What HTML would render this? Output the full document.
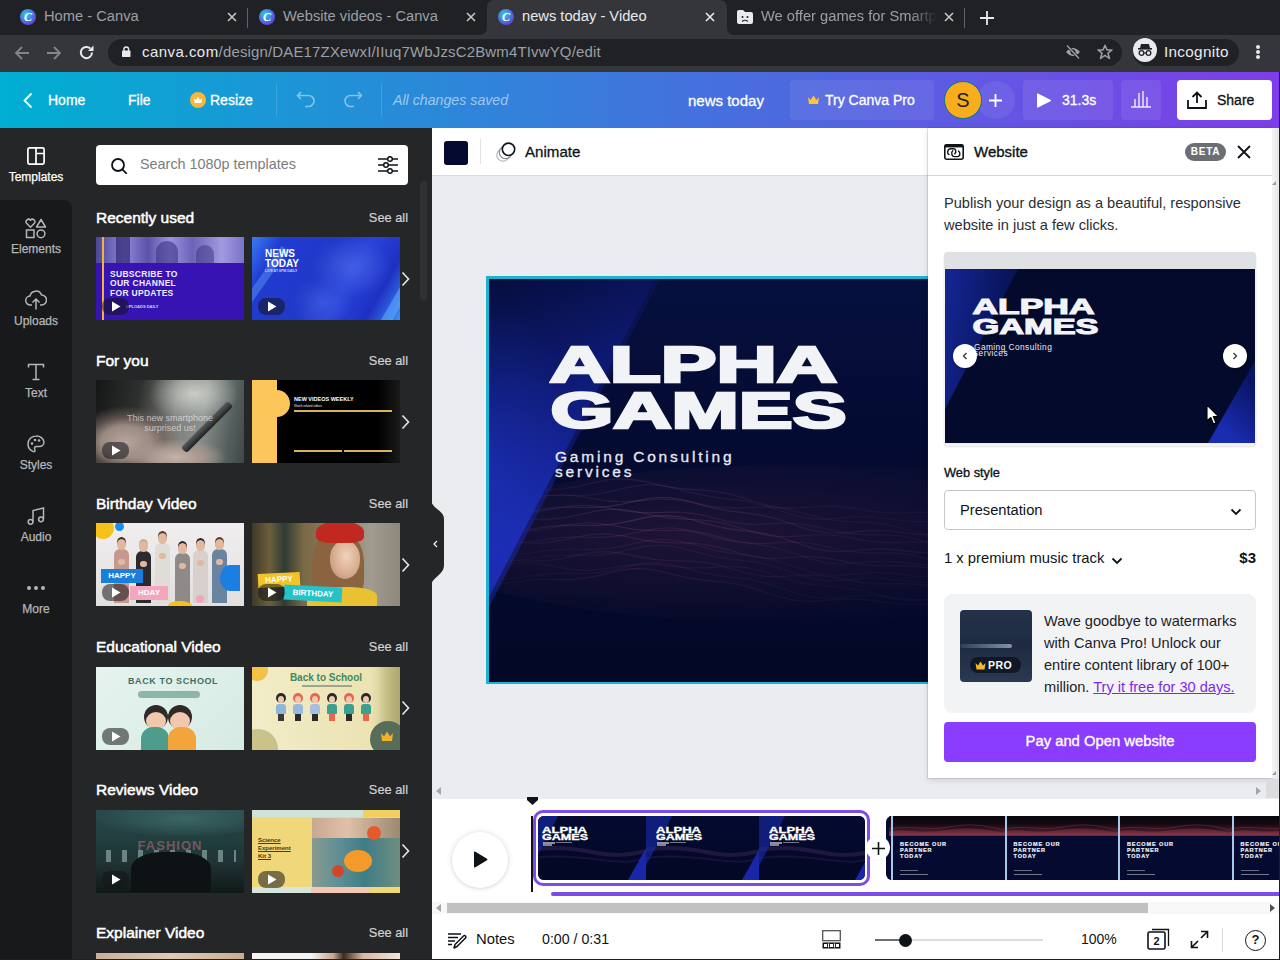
<!DOCTYPE html>
<html><head><meta charset="utf-8">
<style>
*{box-sizing:border-box;margin:0;padding:0}
html,body{width:1280px;height:960px;overflow:hidden;font-family:"Liberation Sans",sans-serif;background:#ebecf0}
.a{position:absolute;white-space:nowrap}
#tabs{left:0;top:0;width:1280px;height:35px;background:#202124}
#tbar{left:0;top:35px;width:1280px;height:37px;background:#35363a}
#hdr{left:0;top:72px;width:1280px;height:56px;background:linear-gradient(90deg,#00afd1 0%,#7e3de8 100%)}
#nav{left:0;top:128px;width:72px;height:832px;background:#18191b}
#panel{left:72px;top:128px;width:360px;height:832px;background:#252627}
#canvas{left:432px;top:128px;width:848px;height:832px;background:#ebecf0}
.tabt{font-size:14.7px;color:#9aa0a6;white-space:nowrap}
.fav{width:16px;height:16px;border-radius:50%;background:radial-gradient(circle at 40% 35%,#2ad0e8,#5b4bd8 70%,#6d3bd8);color:#fff;font:italic bold 12px "Liberation Serif",serif;text-align:center;line-height:16px}
.x{color:#c4c7c5;font-size:16px}
.pb{width:27px;height:17px;border-radius:8px;background:rgba(20,20,25,.55)}
.sh{font-size:15.5px;color:#fff;-webkit-text-stroke:.5px currentColor}
.sa{left:340px;width:68px;text-align:right;font-size:12.8px;color:#d0d2d5;-webkit-text-stroke:.2px currentColor}
.nl{left:0;width:72px;text-align:center;font-size:12px;color:#b4b6b9;-webkit-text-stroke:.25px currentColor}
.th{position:absolute;width:148px;height:83px;overflow:hidden}
.t14{font-size:14px}
.t15{font-size:15px}
.sb15{font-size:15px;color:#0e1318;-webkit-text-stroke:.35px currentColor}
.circ{width:24px;height:24px;border-radius:50%;background:#fff;box-shadow:0 1px 3px rgba(0,0,0,.25)}
.hbtn{color:#fff;font-size:14px;-webkit-text-stroke:.3px currentColor}
</style></head>
<body>
<!-- tab strip -->
<div id="tabs" class="a">
  <div class="a fav" style="left:20px;top:9px">C</div>
  <div class="a tabt" style="left:44px;top:8px">Home - Canva</div>
  <svg class="a" style="left:227px;top:12px" width="10" height="10" viewBox="0 0 10 10"><path d="M1 1L9 9M9 1L1 9" stroke="#c4c7c5" stroke-width="1.6"/></svg>
  <div class="a" style="left:247px;top:8px;width:1px;height:20px;background:#5f6368"></div>
  <div class="a fav" style="left:259px;top:9px">C</div>
  <div class="a tabt" style="left:283px;top:8px">Website videos - Canva</div>
  <svg class="a" style="left:466px;top:12px" width="10" height="10" viewBox="0 0 10 10"><path d="M1 1L9 9M9 1L1 9" stroke="#c4c7c5" stroke-width="1.6"/></svg>
  <svg class="a" style="left:479px;top:0" width="256" height="35" viewBox="0 0 256 35"><path d="M0 35 Q8 35 8 27 L8 8 Q8 0 16 0 L240 0 Q248 0 248 8 L248 27 Q248 35 256 35 Z" fill="#35363a"/></svg>
  <div class="a fav" style="left:498px;top:9px">C</div>
  <div class="a tabt" style="left:522px;top:8px;color:#e8eaed">news today - Video</div>
  <svg class="a" style="left:705px;top:12px" width="10" height="10" viewBox="0 0 10 10"><path d="M1 1L9 9M9 1L1 9" stroke="#e8eaed" stroke-width="1.6"/></svg>
  <svg class="a" style="left:737px;top:10px" width="16" height="14" viewBox="0 0 16 14"><path d="M0 2Q0 0 2 0H6L8 2H14Q16 2 16 4V12Q16 14 14 14H2Q0 14 0 12Z" fill="#e8eaed"/><circle cx="5.5" cy="7" r="1" fill="#202124"/><circle cx="10.5" cy="7" r="1" fill="#202124"/><path d="M5 11.5Q8 9 11 11.5" stroke="#202124" stroke-width="1.2" fill="none"/></svg>
  <div class="a tabt" style="left:761px;top:8px;width:176px;overflow:hidden;-webkit-mask-image:linear-gradient(90deg,#000 85%,transparent)">We offer games for Smartphones</div>
  <svg class="a" style="left:944px;top:12px" width="10" height="10" viewBox="0 0 10 10"><path d="M1 1L9 9M9 1L1 9" stroke="#c4c7c5" stroke-width="1.6"/></svg>
  <div class="a" style="left:964px;top:8px;width:1px;height:20px;background:#5f6368"></div>
  <svg class="a" style="left:980px;top:11px" width="14" height="14" viewBox="0 0 14 14"><path d="M7 0V14M0 7H14" stroke="#e8eaed" stroke-width="1.8"/></svg>
</div>
<!-- toolbar -->
<div id="tbar" class="a">
  <svg class="a" style="left:14px;top:10px" width="16" height="16" viewBox="0 0 16 16"><path d="M15 8H2M8 2L2 8L8 14" stroke="#80868b" stroke-width="1.8" fill="none"/></svg>
  <svg class="a" style="left:46px;top:10px" width="16" height="16" viewBox="0 0 16 16"><path d="M1 8H14M8 2L14 8L8 14" stroke="#80868b" stroke-width="1.8" fill="none"/></svg>
  <svg class="a" style="left:78px;top:9px" width="17" height="17" viewBox="0 0 17 17"><path d="M14 8.5A5.6 5.6 0 1 1 12.3 4.5" stroke="#e8eaed" stroke-width="2" fill="none"/><path d="M15.5 1.5V7H10Z" fill="#e8eaed"/></svg>
  <div class="a" style="left:108px;top:4px;width:1014px;height:27px;background:#202124;border-radius:14px"></div>
  <svg class="a" style="left:122px;top:11px" width="9" height="11" viewBox="0 0 9 11"><rect x="0" y="4.5" width="8.5" height="6.5" rx=".8" fill="#e8eaed"/><path d="M1.9 5V3.3A2.35 2.35 0 0 1 6.6 3.3V5" stroke="#e8eaed" stroke-width="1.4" fill="none"/></svg>
  <div class="a" style="left:142px;top:8px;font-size:15px;color:#e8eaed;white-space:nowrap;letter-spacing:0.45px">canva.com<span style="color:#9aa0a6;letter-spacing:.15px">/design/DAE17ZXewxI/IIuq7WbJzsC2Bwm4TIvwYQ/edit</span></div>
  <svg class="a" style="left:1065px;top:10px" width="16" height="14" viewBox="0 0 16 14"><path d="M1 7Q8 -1 15 7Q8 15 1 7Z" fill="#9aa0a6"/><circle cx="8" cy="7" r="2.5" fill="#202124"/><path d="M2 0.5L14 13.5" stroke="#202124" stroke-width="2.6"/><path d="M2 0.5L14 13.5" stroke="#9aa0a6" stroke-width="1.4"/></svg>
  <svg class="a" style="left:1097px;top:9px" width="16" height="16" viewBox="0 0 16 16"><path d="M8 1.2L10 6H15L11 9.2L12.5 14.5L8 11.4L3.5 14.5L5 9.2L1 6H6Z" stroke="#9aa0a6" stroke-width="1.5" fill="none" stroke-linejoin="round"/></svg>
  <div class="a" style="left:1133px;top:4px;width:106px;height:27px;background:#202124;border-radius:14px"></div>
  <div class="a" style="left:1133px;top:3px;width:24px;height:24px;border-radius:50%;background:#e8eaed"></div>
  <svg class="a" style="left:1137px;top:8px" width="16" height="14" viewBox="0 0 16 14"><path d="M4 1H12L13 5H3Z" fill="#202124"/><rect x="1" y="5" width="14" height="1.6" fill="#202124"/><circle cx="4.5" cy="10" r="2.3" stroke="#202124" stroke-width="1.3" fill="none"/><circle cx="11.5" cy="10" r="2.3" stroke="#202124" stroke-width="1.3" fill="none"/><path d="M6.8 10H9.2" stroke="#202124" stroke-width="1.2"/></svg>
  <div class="a" style="left:1164px;top:8px;font-size:15.3px;color:#e8eaed;letter-spacing:0.3px">Incognito</div>
  <div class="a" style="left:1256px;top:10px;width:4px;height:4px;border-radius:50%;background:#e8eaed"></div>
  <div class="a" style="left:1256px;top:15px;width:4px;height:4px;border-radius:50%;background:#e8eaed"></div>
  <div class="a" style="left:1256px;top:20px;width:4px;height:4px;border-radius:50%;background:#e8eaed"></div>
</div>
<!-- header -->
<div id="hdr" class="a">
  <svg class="a" style="left:22px;top:20px" width="12" height="17" viewBox="0 0 12 17"><path d="M9.5 1.5L2.5 8.5L9.5 15.5" stroke="#fff" stroke-width="1.8" fill="none"/></svg>
  <div class="a hbtn" style="left:48px;top:20px">Home</div>
  <div class="a hbtn" style="left:128px;top:20px">File</div>
  <div class="a" style="left:190px;top:20px;width:16px;height:16px;border-radius:50%;background:#f6b73c"></div>
  <svg class="a" style="left:193px;top:23px" width="10" height="10" viewBox="0 0 10 10"><path d="M1 3L3 5.2L5 1.5L7 5.2L9 3L8.3 8H1.7Z" fill="#fff"/></svg>
  <div class="a hbtn" style="left:210px;top:20px">Resize</div>
  <div class="a" style="left:276px;top:12px;width:1px;height:32px;background:rgba(255,255,255,.15)"></div>
  <svg class="a" style="left:296px;top:19px" width="20" height="17" viewBox="0 0 20 17"><path d="M5 1L1.5 4.5L5 8M1.5 4.5H12.5A5.5 5.5 0 0 1 12.5 15.5H9" stroke="rgba(255,255,255,.45)" stroke-width="1.6" fill="none"/></svg>
  <svg class="a" style="left:343px;top:19px" width="20" height="17" viewBox="0 0 20 17"><path d="M15 1L18.5 4.5L15 8M18.5 4.5H7.5A5.5 5.5 0 0 0 7.5 15.5H11" stroke="rgba(255,255,255,.45)" stroke-width="1.6" fill="none"/></svg>
  <div class="a" style="left:381px;top:12px;width:1px;height:32px;background:rgba(255,255,255,.15)"></div>
  <div class="a" style="left:393px;top:20px;color:rgba(255,255,255,.55);font-style:italic;font-size:14.2px">All changes saved</div>
  <div class="a hbtn" style="left:688px;top:20px;font-size:15px">news today</div>
  <div class="a" style="left:790px;top:8px;width:144px;height:40px;background:rgba(255,255,255,.07);border-radius:4px"></div>
  <svg class="a" style="left:807px;top:22px" width="13" height="12" viewBox="0 0 13 12"><path d="M1 3L3.5 6L6.5 1.5L9.5 6L12 3L11 10H2Z" fill="#ffc43a"/></svg>
  <div class="a hbtn" style="left:825px;top:20px">Try Canva Pro</div>
  <div class="a" style="left:977px;top:9px;width:38px;height:38px;border-radius:50%;background:rgba(255,255,255,.07)"></div>
  <svg class="a" style="left:989px;top:22px" width="13" height="13" viewBox="0 0 13 13"><path d="M6.5 0V13M0 6.5H13" stroke="#fff" stroke-width="1.8"/></svg>
  <div class="a" style="left:944px;top:9px;width:38px;height:38px;border-radius:50%;background:#f7ad1c;border:1.5px solid #0b7a86"></div>
  <div class="a" style="left:944px;top:17px;width:38px;text-align:center;font-size:20px;color:#1e1e1e">S</div>
  <div class="a" style="left:1023px;top:8px;width:90px;height:40px;background:rgba(255,255,255,.08);border-radius:4px"></div>
  <svg class="a" style="left:1036px;top:20px" width="16" height="17" viewBox="0 0 16 17"><path d="M2 1.5Q1 1 1 2.3V14.7Q1 16 2 15.5L14.5 9.3Q15.5 8.5 14.5 7.7Z" fill="#fff"/></svg>
  <div class="a hbtn" style="left:1062px;top:20px">31.3s</div>
  <div class="a" style="left:1121px;top:8px;width:40px;height:40px;background:rgba(255,255,255,.08);border-radius:4px"></div>
  <svg class="a" style="left:1131px;top:18px" width="20" height="18" viewBox="0 0 20 18"><path d="M0 17H20M4 17V9M8 17V3M12 17V1M16 17V7" stroke="rgba(255,255,255,.85)" stroke-width="1.5"/></svg>
  <div class="a" style="left:1177px;top:8px;width:95px;height:40px;background:#fff;border-radius:4px"></div>
  <svg class="a" style="left:1187px;top:19px" width="20" height="18" viewBox="0 0 20 18"><path d="M1 9V17H19V9M10 12V1.5M5.5 6L10 1.5L14.5 6" stroke="#0e1318" stroke-width="1.8" fill="none"/></svg>
  <div class="a hbtn" style="left:1217px;top:20px;color:#0e1318">Share</div>
</div>
<div id="nav" class="a">
  <div class="a" style="left:0;top:0;width:72px;height:72px;background:#252627"></div>
  <div class="a" style="left:0;top:72px;width:72px;height:20px;background:#252627"></div>
  <div class="a" style="left:0;top:72px;width:72px;height:760px;background:#18191b;border-top-right-radius:8px"></div>
  <svg class="a" style="left:27px;top:19px" width="18" height="18" viewBox="0 0 18 18"><rect x="0.9" y="0.9" width="16.2" height="16.2" rx="1.5" stroke="#fff" stroke-width="1.7" fill="none"/><path d="M9 1V17M9 6.5H17" stroke="#fff" stroke-width="1.7"/></svg>
  <div class="a nl" style="top:42px;color:#fff">Templates</div>
  <svg class="a" style="left:25px;top:90px" width="22" height="21" viewBox="0 0 22 21"><path d="M5.5 9.2L1.6 5.3A2.2 2.2 0 0 1 5.5 2.2A2.2 2.2 0 0 1 9.4 5.3Z" stroke="#b4b6b9" stroke-width="1.5" fill="none" stroke-linejoin="round"/><path d="M16 1.5L20.5 9H11.5Z" stroke="#b4b6b9" stroke-width="1.5" fill="none" stroke-linejoin="round"/><rect x="1.5" y="12" width="7.5" height="7.5" stroke="#b4b6b9" stroke-width="1.5" fill="none"/><circle cx="16" cy="15.8" r="3.9" stroke="#b4b6b9" stroke-width="1.5" fill="none"/></svg>
  <div class="a nl" style="top:114px">Elements</div>
  <svg class="a" style="left:25px;top:162px" width="22" height="20" viewBox="0 0 22 20"><path d="M7 15H5.5A4.5 4.5 0 0 1 5 6A6 6 0 0 1 16.5 5A4.6 4.6 0 0 1 16.5 15H15" stroke="#b4b6b9" stroke-width="1.5" fill="none" stroke-linejoin="round"/><path d="M11 19.5V9M7.5 12.5L11 9L14.5 12.5" stroke="#b4b6b9" stroke-width="1.5" fill="none"/></svg>
  <div class="a nl" style="top:186px">Uploads</div>
  <svg class="a" style="left:27px;top:235px" width="18" height="18" viewBox="0 0 18 18"><path d="M1.5 4.5V1.5H16.5V4.5M9 1.5V16.5M5.5 16.5H12.5" stroke="#b4b6b9" stroke-width="1.5" fill="none"/></svg>
  <div class="a nl" style="top:258px">Text</div>
  <svg class="a" style="left:27px;top:307px" width="18" height="18" viewBox="0 0 18 18"><path d="M9 1A8 8 0 0 0 1 9A8 8 0 0 0 6.5 16.6C8 17 8.5 15.5 7.8 14.3C7 13 7.8 11.5 9.3 11.5H12.5A4.5 4.5 0 0 0 17 7A7.5 6.5 0 0 0 9 1Z" stroke="#b4b6b9" stroke-width="1.5" fill="none"/><circle cx="5" cy="8.5" r="1.3" fill="#b4b6b9"/><circle cx="8" cy="5" r="1.3" fill="#b4b6b9"/><circle cx="12" cy="5.5" r="1.3" fill="#b4b6b9"/></svg>
  <div class="a nl" style="top:330px">Styles</div>
  <svg class="a" style="left:27px;top:379px" width="18" height="18" viewBox="0 0 18 18"><path d="M6 14.5V3.5L16.5 1V12" stroke="#b4b6b9" stroke-width="1.5" fill="none"/><circle cx="3.6" cy="14.8" r="2.4" stroke="#b4b6b9" stroke-width="1.5" fill="none"/><circle cx="14" cy="12.3" r="2.4" stroke="#b4b6b9" stroke-width="1.5" fill="none"/></svg>
  <div class="a nl" style="top:402px">Audio</div>
  <div class="a" style="left:27px;top:458px;width:4px;height:4px;border-radius:50%;background:#b4b6b9"></div>
  <div class="a" style="left:34px;top:458px;width:4px;height:4px;border-radius:50%;background:#b4b6b9"></div>
  <div class="a" style="left:41px;top:458px;width:4px;height:4px;border-radius:50%;background:#b4b6b9"></div>
  <div class="a nl" style="top:474px">More</div>
</div>
<div id="panel" class="a">
  <div class="a" style="left:24px;top:17px;width:312px;height:40px;background:#fff;border-radius:4px"></div>
  <svg class="a" style="left:39px;top:30px" width="19" height="16" viewBox="0 0 19 16"><circle cx="7" cy="7" r="6" stroke="#0e1318" stroke-width="1.8" fill="none"/><path d="M11.3 11.3L15.8 15.8" stroke="#0e1318" stroke-width="1.8"/></svg>
  <div class="a" style="left:68px;top:28px;font-size:14.4px;color:#7a7c80">Search 1080p templates</div>
  <svg class="a" style="left:306px;top:28px" width="20" height="18" viewBox="0 0 20 18"><path d="M0 3H20M0 9H20M0 15H20" stroke="#0e1318" stroke-width="1.5"/><circle cx="12" cy="3" r="2.3" fill="#fff" stroke="#0e1318" stroke-width="1.5"/><circle cx="8" cy="9" r="2.3" fill="#fff" stroke="#0e1318" stroke-width="1.5"/><circle cx="12" cy="15" r="2.3" fill="#fff" stroke="#0e1318" stroke-width="1.5"/></svg>
  <div class="a" style="left:348px;top:53px;width:7px;height:119px;border-radius:4px;background:#303134"></div>
</div>
<div id="thumbs" class="a" style="left:0;top:0">
<div class="a sh" style="left:96px;top:209px">Recently used</div><div class="a sa" style="top:210px">See all</div>
<svg class="a" style="left:401px;top:271px" width="9" height="16" viewBox="0 0 9 16"><path d="M1.5 1.5L7.5 8L1.5 14.5" stroke="#e6e7e8" stroke-width="1.6" fill="none"/></svg>
<div class="a sh" style="left:96px;top:352px">For you</div><div class="a sa" style="top:353px">See all</div>
<svg class="a" style="left:401px;top:414px" width="9" height="16" viewBox="0 0 9 16"><path d="M1.5 1.5L7.5 8L1.5 14.5" stroke="#e6e7e8" stroke-width="1.6" fill="none"/></svg>
<div class="a sh" style="left:96px;top:495px">Birthday Video</div><div class="a sa" style="top:496px">See all</div>
<svg class="a" style="left:401px;top:557px" width="9" height="16" viewBox="0 0 9 16"><path d="M1.5 1.5L7.5 8L1.5 14.5" stroke="#e6e7e8" stroke-width="1.6" fill="none"/></svg>
<div class="a sh" style="left:96px;top:638px">Educational Video</div><div class="a sa" style="top:639px">See all</div>
<svg class="a" style="left:401px;top:700px" width="9" height="16" viewBox="0 0 9 16"><path d="M1.5 1.5L7.5 8L1.5 14.5" stroke="#e6e7e8" stroke-width="1.6" fill="none"/></svg>
<div class="a sh" style="left:96px;top:781px">Reviews Video</div><div class="a sa" style="top:782px">See all</div>
<svg class="a" style="left:401px;top:843px" width="9" height="16" viewBox="0 0 9 16"><path d="M1.5 1.5L7.5 8L1.5 14.5" stroke="#e6e7e8" stroke-width="1.6" fill="none"/></svg>
<div class="a sh" style="left:96px;top:924px">Explainer Video</div><div class="a sa" style="top:925px">See all</div>
<div class="th" style="left:96px;top:237px;background:#3713b3">
  <div class="a" style="left:0;top:0;width:148px;height:26px;background:linear-gradient(90deg,#4d4698,#8d86d6 20%,#5b53a8 35%,#9a92de 50%,#6b63b8 65%,#a09ae0 85%,#7c74c8)"></div>
  <div class="a" style="left:20px;top:0;width:14px;height:26px;background:#2d2670;opacity:.7"></div>
  <div class="a" style="left:60px;top:4px;width:22px;height:22px;background:#3a3382;border-radius:50% 50% 0 0;opacity:.6"></div><div class="a" style="left:100px;top:8px;width:18px;height:18px;background:#3a3382;border-radius:50% 50% 0 0;opacity:.5"></div>
  <div class="a" style="left:6px;top:0;width:2px;height:83px;background:#f2b23a"></div>
  <div class="a" style="left:14px;top:33px;color:#f0ecff;font:bold 8.5px/9.3px 'Liberation Sans',sans-serif;letter-spacing:.3px">SUBSCRIBE TO<br>OUR CHANNEL<br>FOR UPDATES</div>
  <div class="a" style="left:30px;top:67px;color:#d8d0ff;font:bold 4px 'Liberation Sans',sans-serif">UPLOADS DAILY</div>
</div><div class="a pb" style="left:102px;top:298px"><svg width="27" height="17" viewBox="0 0 27 17" style="display:block"><path d="M10 3.5V13.5L18.5 8.5Z" fill="#fff"/></svg></div><div class="th" style="left:252px;top:237px;background:radial-gradient(ellipse 40px 30px at 100px 30px,rgba(90,120,240,.5),transparent),radial-gradient(ellipse 30px 25px at 70px 65px,rgba(80,110,235,.45),transparent),linear-gradient(120deg,#3a7bf0 0%,#1f3cd2 16%,#2238c8 45%,#2a44d8 62%,#1e30c4 82%,#3f8ef5 100%)">
  <div class="a" style="left:-30px;top:40px;width:80px;height:8px;background:rgba(120,180,255,.35);transform:rotate(-55deg)"></div>
  <div class="a" style="left:118px;top:55px;width:60px;height:10px;background:rgba(90,170,255,.6);transform:rotate(-60deg)"></div>
  <div class="a" style="left:13px;top:12px;color:#fff;font:bold 10px/9.5px 'Liberation Sans',sans-serif">NEWS<br>TODAY</div>
  <div class="a" style="left:13px;top:32px;color:#c8d0ff;font:bold 3.5px 'Liberation Sans',sans-serif">LIVE AT 6PM DAILY</div>
</div><div class="a pb" style="left:258px;top:298px"><svg width="27" height="17" viewBox="0 0 27 17" style="display:block"><path d="M10 3.5V13.5L18.5 8.5Z" fill="#fff"/></svg></div><div class="th" style="left:96px;top:380px;background:linear-gradient(100deg,#151616 0%,#2e302f 28%,#7d7f7b 52%,#8a908c 70%,#55605e 88%,#3f4746 100%)">
  <div class="a" style="left:0;top:0;width:148px;height:83px;background:radial-gradient(ellipse 45px 28px at 98px 14px,rgba(225,228,222,.75),transparent)"></div>
  <div class="a" style="left:-25px;top:22px;width:110px;height:80px;background:radial-gradient(ellipse 55px 36px at 50% 50%,#b5a59c 0%,#9a8a82 45%,rgba(120,105,98,.6) 70%,transparent 100%)"></div>
  <div class="a" style="left:25px;top:55px;width:110px;height:40px;background:radial-gradient(ellipse 50px 18px at 50% 55%,#c2b2aa 0%,#a89890 50%,transparent 100%)"></div>
  <div class="a" style="left:78px;top:43px;width:66px;height:8px;background:linear-gradient(180deg,#5a5e60,#1e2122);transform:rotate(-45deg);border-radius:3px"></div>
  <div class="a" style="left:0;top:33px;width:148px;text-align:center;color:rgba(255,255,255,.6);font:9px/10px 'Liberation Sans',sans-serif">This new smartphone<br>surprised us!</div>
</div><div class="a pb" style="left:102px;top:442px"><svg width="27" height="17" viewBox="0 0 27 17" style="display:block"><path d="M10 3.5V13.5L18.5 8.5Z" fill="#fff"/></svg></div><div class="th" style="left:252px;top:380px;background:linear-gradient(90deg,#000 85%,#1a1a1a)">
  <div class="a" style="left:0;top:0;width:25px;height:83px;background:#fcc65a"></div>
  <div class="a" style="left:12px;top:10px;width:26px;height:27px;border-radius:50%;background:#fcc65a"></div>
  <div class="a" style="left:42px;top:16px;color:#fff;font:bold 5.5px 'Liberation Sans',sans-serif">NEW VIDEOS WEEKLY</div>
  <div class="a" style="left:42px;top:24px;color:#eee;font:3px 'Liberation Sans',sans-serif">Watch related videos</div>
  <div class="a" style="left:42px;top:30px;width:98px;height:2px;background:#d9b45a"></div>
  <div class="a" style="left:42px;top:70px;width:48px;height:2px;background:#d9b45a"></div>
  <div class="a" style="left:92px;top:70px;width:48px;height:2px;background:#d9b45a"></div>
</div><div class="th" style="left:96px;top:523px;background:#eae8e8">
  <div class="a" style="left:0;top:0;width:148px;height:83px;background:linear-gradient(180deg,#f0eeee,#e2dfdf)"></div>
  <div class="a" style="left:-4px;top:-6px;width:22px;height:22px;border-radius:50%;background:#f6c21a"></div>
  <div class="a" style="left:19px;top:-1px;width:9px;height:9px;border-radius:50%;background:#1a8ee8"></div>
  <div class="a" style="left:18px;top:26px;width:15px;height:54px;border-radius:6px 6px 0 0;background:#c49a90"></div><div class="a" style="left:21px;top:16px;width:9px;height:11px;border-radius:50%;background:#e2b8a0;box-shadow:0 -2px 0 #3a2a22"></div><div class="a" style="left:22px;top:36px;width:7px;height:6px;border-radius:3px;background:#e2b8a0"></div><div class="a" style="left:40px;top:28px;width:15px;height:52px;border-radius:6px 6px 0 0;background:#2b2b2d"></div><div class="a" style="left:43px;top:18px;width:9px;height:11px;border-radius:50%;background:#e2b8a0;box-shadow:0 -2px 0 #caa890"></div><div class="a" style="left:44px;top:38px;width:7px;height:6px;border-radius:3px;background:#e2b8a0"></div><div class="a" style="left:59px;top:20px;width:15px;height:60px;border-radius:6px 6px 0 0;background:#e0dcd8"></div><div class="a" style="left:62px;top:10px;width:9px;height:11px;border-radius:50%;background:#e2b8a0;box-shadow:0 -2px 0 #4a3a30"></div><div class="a" style="left:63px;top:30px;width:7px;height:6px;border-radius:3px;background:#e2b8a0"></div><div class="a" style="left:79px;top:30px;width:15px;height:50px;border-radius:6px 6px 0 0;background:#8d8a88"></div><div class="a" style="left:82px;top:20px;width:9px;height:11px;border-radius:50%;background:#e2b8a0;box-shadow:0 -2px 0 #2a2220"></div><div class="a" style="left:83px;top:40px;width:7px;height:6px;border-radius:3px;background:#e2b8a0"></div><div class="a" style="left:97px;top:27px;width:15px;height:53px;border-radius:6px 6px 0 0;background:#d8d0cc"></div><div class="a" style="left:100px;top:17px;width:9px;height:11px;border-radius:50%;background:#e2b8a0;box-shadow:0 -2px 0 #2a2220"></div><div class="a" style="left:101px;top:37px;width:7px;height:6px;border-radius:3px;background:#e2b8a0"></div><div class="a" style="left:116px;top:26px;width:15px;height:54px;border-radius:6px 6px 0 0;background:#6a84a0"></div><div class="a" style="left:119px;top:16px;width:9px;height:11px;border-radius:50%;background:#e2b8a0;box-shadow:0 -2px 0 #5a3a2a"></div><div class="a" style="left:120px;top:36px;width:7px;height:6px;border-radius:3px;background:#e2b8a0"></div><div class="a" style="left:124px;top:42px;width:20px;height:26px;border-radius:50% 0 0 50%;background:#1a7fe0"></div>
  <div class="a" style="left:5px;top:46px;width:42px;height:14px;background:#1b7fd9;color:#fff;font:bold 8px/14px 'Liberation Sans',sans-serif;text-align:center">HAPPY</div>
  <div class="a" style="left:34px;top:63px;width:38px;height:14px;background:#f3a6bd;color:#fff;font:bold 8px/14px 'Liberation Sans',sans-serif;text-align:center">HDAY</div>
  <div class="a" style="left:72px;top:78px;width:24px;height:10px;border-radius:50%;background:#f6c21a"></div>
  <div class="a" style="left:100px;top:72px;width:8px;height:8px;border-radius:50%;background:#f2a5c0"></div>
</div><div class="a pb" style="left:102px;top:584px"><svg width="27" height="17" viewBox="0 0 27 17" style="display:block"><path d="M10 3.5V13.5L18.5 8.5Z" fill="#fff"/></svg></div><div class="th" style="left:252px;top:523px;background:linear-gradient(90deg,#3d3a2a 0%,#6e5f3c 12%,#2f3b33 22%,#7b6a45 35%,#8a7e6a 60%,#a29c90 80%,#8e887c 100%)">
  <div class="a" style="left:60px;top:8px;width:52px;height:70px;border-radius:45% 45% 30% 30%;background:#8a6440"></div><div class="a" style="left:78px;top:18px;width:30px;height:38px;border-radius:45% 45% 50% 50%;background:radial-gradient(ellipse at 55% 40%,#f0d2bc 0,#d8ad92 55%,#b88868 100%)"></div>
  <div class="a" style="left:64px;top:-2px;width:48px;height:22px;border-radius:50% 50% 30% 30%;background:#c02820"></div>
  <div class="a" style="left:55px;top:64px;width:70px;height:22px;border-radius:40% 40% 0 0;background:#e8c232"></div>
  <div class="a" style="left:6px;top:50px;width:42px;height:14px;background:#f2c428;color:#fff;font:bold 8px/14px 'Liberation Sans',sans-serif;text-align:center;transform:rotate(-3deg)">HAPPY</div>
  <div class="a" style="left:32px;top:63px;width:58px;height:15px;background:#25c3c9;color:#fff;font:bold 8px/15px 'Liberation Sans',sans-serif;text-align:center;transform:rotate(3deg)">BIRTHDAY</div>
</div><div class="a pb" style="left:258px;top:584px"><svg width="27" height="17" viewBox="0 0 27 17" style="display:block"><path d="M10 3.5V13.5L18.5 8.5Z" fill="#fff"/></svg></div><div class="th" style="left:96px;top:667px;background:linear-gradient(135deg,#e6f3ee,#d6ebe3)">
  <div class="a" style="left:0;top:9px;width:148px;text-align:center;color:#3f6f62;font:bold 9px 'Liberation Sans',sans-serif;letter-spacing:.6px">&nbsp;&nbsp;BACK TO SCHOOL</div>
  <div class="a" style="left:42px;top:24px;width:62px;height:7px;border-radius:4px;background:#8db5a8"></div>
  <div class="a" style="left:48px;top:38px;width:24px;height:24px;border-radius:50%;background:#2e2a2a"></div>
  <div class="a" style="left:72px;top:38px;width:24px;height:24px;border-radius:50%;background:#2e2a2a"></div>
  <div class="a" style="left:50px;top:45px;width:20px;height:18px;border-radius:50%;background:#f1c8ad"></div>
  <div class="a" style="left:74px;top:45px;width:20px;height:18px;border-radius:50%;background:#f1c8ad"></div>
  <div class="a" style="left:45px;top:60px;width:28px;height:23px;border-radius:12px 12px 0 0;background:#4d9c8c"></div>
  <div class="a" style="left:72px;top:60px;width:28px;height:23px;border-radius:12px 12px 0 0;background:#f2a53a"></div>
</div><div class="a pb" style="left:102px;top:728px"><svg width="27" height="17" viewBox="0 0 27 17" style="display:block"><path d="M10 3.5V13.5L18.5 8.5Z" fill="#fff"/></svg></div><div class="th" style="left:252px;top:667px;background:linear-gradient(90deg,#f2ecc8,#ece3b3 80%,#bfb77a)">
  <div class="a" style="left:-6px;top:-8px;width:22px;height:22px;border-radius:50%;background:#f3c04a"></div>
  <div class="a" style="left:0;top:5px;width:148px;text-align:center;color:#3f8a5e;font:bold 10px 'Liberation Sans',sans-serif">Back to School</div>
  <div class="a" style="left:50px;top:18px;width:50px;height:2px;background:#9aa890"></div>
  <div class="a" style="left:24px;top:26px;width:10px;height:10px;border-radius:50%;background:#2a2a2a"></div><div class="a" style="left:26px;top:29px;width:6px;height:7px;border-radius:50%;background:#f2c8b0"></div><div class="a" style="left:24px;top:37px;width:10px;height:10px;border-radius:3px 3px 1px 1px;background:#8fb8d8"></div><div class="a" style="left:26px;top:47px;width:6px;height:7px;background:#3a3a3a"></div><div class="a" style="left:41px;top:26px;width:10px;height:10px;border-radius:50%;background:#e8674a"></div><div class="a" style="left:43px;top:29px;width:6px;height:7px;border-radius:50%;background:#f2c8b0"></div><div class="a" style="left:41px;top:37px;width:10px;height:10px;border-radius:3px 3px 1px 1px;background:#9ab8d8"></div><div class="a" style="left:43px;top:47px;width:6px;height:7px;background:#2a2a2a"></div><div class="a" style="left:58px;top:26px;width:10px;height:10px;border-radius:50%;background:#e8674a"></div><div class="a" style="left:60px;top:29px;width:6px;height:7px;border-radius:50%;background:#f2c8b0"></div><div class="a" style="left:58px;top:37px;width:10px;height:10px;border-radius:3px 3px 1px 1px;background:#a8c0e0"></div><div class="a" style="left:60px;top:47px;width:6px;height:7px;background:#2a2a2a"></div><div class="a" style="left:75px;top:26px;width:10px;height:10px;border-radius:50%;background:#2a2a2a"></div><div class="a" style="left:77px;top:29px;width:6px;height:7px;border-radius:50%;background:#f2c8b0"></div><div class="a" style="left:75px;top:37px;width:10px;height:10px;border-radius:3px 3px 1px 1px;background:#3aa090"></div><div class="a" style="left:77px;top:47px;width:6px;height:7px;background:#e8674a"></div><div class="a" style="left:92px;top:26px;width:10px;height:10px;border-radius:50%;background:#e8674a"></div><div class="a" style="left:94px;top:29px;width:6px;height:7px;border-radius:50%;background:#f2c8b0"></div><div class="a" style="left:92px;top:37px;width:10px;height:10px;border-radius:3px 3px 1px 1px;background:#3aa090"></div><div class="a" style="left:94px;top:47px;width:6px;height:7px;background:#2a2a2a"></div><div class="a" style="left:109px;top:26px;width:10px;height:10px;border-radius:50%;background:#2a2a2a"></div><div class="a" style="left:111px;top:29px;width:6px;height:7px;border-radius:50%;background:#f2c8b0"></div><div class="a" style="left:109px;top:37px;width:10px;height:10px;border-radius:3px 3px 1px 1px;background:#3aa090"></div><div class="a" style="left:111px;top:47px;width:6px;height:7px;background:#e8674a"></div><div class="a" style="left:-14px;top:62px;width:40px;height:40px;border-radius:50%;background:#c9c38a"></div><div class="a" style="left:126px;top:0;width:22px;height:83px;background:linear-gradient(90deg,rgba(170,165,110,0),rgba(170,165,110,.8))"></div>
  <div class="a" style="left:118px;top:54px;width:36px;height:36px;border-radius:50%;background:#586c5a"></div>
  <svg class="a" style="left:128px;top:63px" width="14" height="12" viewBox="0 0 14 12"><path d="M1 3L4 6.5L7 1.5L10 6.5L13 3L12 11H2Z" fill="#f3b12b"/></svg>
</div><div class="th" style="left:96px;top:810px;background:linear-gradient(180deg,#2a4a4b 0%,#1f3a3b 45%,#223536 60%,#101818 100%)">
  <div class="a" style="left:0;top:0;width:148px;height:28px;background:radial-gradient(ellipse at 60% 30%,#3b6565,transparent 70%)"></div>
  <div class="a" style="left:10px;top:40px;width:130px;height:12px;background:repeating-linear-gradient(90deg,#9bb8b6 0 5px,transparent 5px 16px);opacity:.6"></div>
  <div class="a" style="left:35px;top:42px;width:80px;height:40px;border-radius:40% 40% 0 0;background:#0d1314"></div>
  <div class="a" style="left:22px;top:28px;width:104px;text-align:center;color:rgba(200,110,120,.55);font:bold 13px 'Liberation Sans',sans-serif;letter-spacing:1px">FASHION</div>
</div><div class="a pb" style="left:102px;top:871px"><svg width="27" height="17" viewBox="0 0 27 17" style="display:block"><path d="M10 3.5V13.5L18.5 8.5Z" fill="#fff"/></svg></div><div class="th" style="left:252px;top:810px;background:#f0d77a">
  <div class="a" style="left:0;top:0;width:148px;height:7px;background:linear-gradient(90deg,#cfe3d9 75%,#f0d060 75%)"></div>
  <div class="a" style="left:0;top:77px;width:148px;height:6px;background:linear-gradient(90deg,#d5e7dc 40%,#f4c8b0 40%,#f4c8b0 80%,#f2d870 80%)"></div>
  <div class="a" style="left:60px;top:8px;width:88px;height:69px;background:linear-gradient(90deg,#8a9a90,#5f8f94 30%,#3f7c86 60%,#6f8e80)"></div>
  <div class="a" style="left:60px;top:8px;width:88px;height:20px;background:linear-gradient(90deg,#c8a890,#e0c0a8 40%,#9a8a70)"></div>
  <div class="a" style="left:115px;top:16px;width:14px;height:14px;border-radius:50%;background:#e55a2a"></div>
  <div class="a" style="left:92px;top:40px;width:28px;height:22px;border-radius:50%;background:#f39a2a"></div>
  <div class="a" style="left:80px;top:55px;width:12px;height:12px;border-radius:50%;background:#d8442a"></div>
  <div class="a" style="left:6px;top:26px;color:#4a3a10;font:bold 6px/8px 'Liberation Sans',sans-serif;text-decoration:underline">Science<br>Experiment<br>Kit 3</div>
</div><div class="a pb" style="left:258px;top:871px"><svg width="27" height="17" viewBox="0 0 27 17" style="display:block"><path d="M10 3.5V13.5L18.5 8.5Z" fill="#fff"/></svg></div><div class="th" style="left:96px;top:953px;background:linear-gradient(90deg,#c8b09a,#e0cab4 50%,#c9ad92)"></div><div class="th" style="left:252px;top:953px;background:linear-gradient(90deg,#f6f4f2 0,#f6f4f2 40%,#c7a58e 55%,#3a2a20 62%,#d8b8a0 75%,#efe8e2)"></div>
</div>
<div id="canvas" class="a">
  <!-- toolbar -->
  <div class="a" style="left:0;top:0;width:848px;height:48px;background:#fff;border-bottom:1px solid #dadce0"></div>
  <div class="a" style="left:12px;top:13px;width:24px;height:24px;border-radius:3px;background:#050a30;box-shadow:inset 0 0 0 1px rgba(0,0,0,.1)"></div>
  <div class="a" style="left:48px;top:11px;width:1px;height:25px;background:#e1e2e5"></div>
  <svg class="a" style="left:63px;top:14px" width="22" height="22" viewBox="0 0 22 22"><circle cx="8" cy="13" r="6.2" stroke="#b9bbbe" stroke-width="1.3" fill="#fff"/><circle cx="10.5" cy="10.5" r="6.2" stroke="#8b8d90" stroke-width="1.3" fill="#fff"/><circle cx="13.5" cy="7.3" r="6.2" stroke="#0e1318" stroke-width="1.6" fill="#fff"/></svg>
  <div class="a t14" style="left:93px;top:15px;color:#0e1318;font-size:15.1px;-webkit-text-stroke:.3px currentColor">Animate</div>
  <!-- design -->
  <div class="a" style="left:54px;top:148px;width:800px;height:408px;background:#1ab3d2"></div>
  <div id="design" class="a" style="left:57px;top:151px;width:716px;height:403px;overflow:hidden;background:#030a2c">
    <div class="a" style="left:0;top:0;width:716px;height:403px;background:linear-gradient(180deg,#06103e 0%,#040b32 40%,#030826 100%)"></div>
    <svg class="a" style="left:0;top:0" width="716" height="403" viewBox="0 0 716 403">
      <defs>
        <linearGradient id="bl" gradientUnits="userSpaceOnUse" x1="20" y1="0" x2="110" y2="230"><stop offset="0" stop-color="#070e40"/><stop offset="0.45" stop-color="#0d1a72"/><stop offset="1" stop-color="#1a2aac"/></linearGradient><filter id="bf" x="-10%" y="-10%" width="120%" height="120%"><feGaussianBlur stdDeviation="2.5"/></filter>
        <radialGradient id="wv" cx="0.5" cy="0.5" r="0.5"><stop offset="0" stop-color="#3a1f4a" stop-opacity=".55"/><stop offset="1" stop-color="#3a1f4a" stop-opacity="0"/></radialGradient>
        <radialGradient id="gl" cx="0" cy="0.62" r="0.55"><stop offset="0" stop-color="#2238d0" stop-opacity=".45"/><stop offset="1" stop-color="#2238d0" stop-opacity="0"/></radialGradient>
      </defs>
      
      <defs><linearGradient id="ws" gradientUnits="userSpaceOnUse" x1="0" y1="0" x2="716" y2="0"><stop offset="0" stop-color="#7a4a7a" stop-opacity=".1"/><stop offset="0.2" stop-color="#8a5080" stop-opacity=".32"/><stop offset="0.5" stop-color="#6a4070" stop-opacity=".2"/><stop offset="1" stop-color="#5a3a66" stop-opacity=".1"/></linearGradient><radialGradient id="wf" cx="0.35" cy="0.45" r="0.6"><stop offset="0" stop-color="#2a1838" stop-opacity=".7"/><stop offset="1" stop-color="#2a1838" stop-opacity="0"/></radialGradient></defs><ellipse cx="330" cy="265" rx="400" ry="80" fill="url(#wf)"/><polyline points="0,213.6 12,211.8 24,210.5 36,210.0 48,210.2 60,210.5 72,210.0 84,208.4 96,205.9 108,203.0 120,200.7 132,199.8 144,200.6 156,202.7 168,205.4 180,207.9 192,209.6 204,210.6 216,211.4 228,212.6 240,214.8 252,218.1 264,222.0 276,225.6 288,228.2 300,229.2 312,228.9 324,227.9 336,227.1 348,227.2 360,228.4 372,230.4 384,232.4 396,233.7 408,234.1 420,233.7 432,233.2 444,233.5 456,235.0 468,237.8 480,241.2 492,244.6 504,246.9 516,247.9 528,247.7 540,247.1 552,246.8 564,247.3 576,248.6 588,250.3 600,251.6 612,251.9 624,250.9 636,249.0 648,247.1 660,246.1 672,246.4 684,248.0 696,250.4 708,252.9" stroke="url(#ws)" stroke-width="1.2" fill="none" opacity="0.60"/><polyline points="0,222.0 12,222.1 24,220.9 36,219.1 48,217.4 60,216.5 72,216.4 84,216.5 96,216.3 108,215.2 120,212.9 132,210.0 144,207.4 156,205.8 168,206.0 180,207.8 192,210.8 204,213.9 216,216.6 228,218.5 240,219.9 252,221.3 264,223.5 276,226.7 288,230.7 300,234.8 312,238.1 324,240.0 336,240.3 348,239.4 360,238.2 372,237.6 384,238.0 396,239.3 408,241.0 420,242.2 432,242.6 444,242.1 456,241.1 468,240.4 480,240.9 492,242.8 504,245.9 516,249.3 528,252.3 540,254.1 552,254.7 564,254.5 576,254.3 588,254.7 600,256.1 612,258.1 624,260.0 636,261.0 648,260.8 660,259.3 672,257.2 684,255.5 696,254.8 708,255.5" stroke="url(#ws)" stroke-width="0.9" fill="none" opacity="0.68"/><polyline points="0,220.4 12,221.2 24,221.1 36,219.9 48,218.1 60,216.6 72,215.9 84,216.6 96,218.3 108,220.4 120,222.1 132,222.8 144,222.4 156,221.3 168,220.3 180,220.3 192,221.5 204,223.7 216,226.2 228,228.1 240,229.0 252,228.9 264,228.2 276,227.9 288,228.6 300,230.6 312,233.6 324,237.0 336,239.9 348,241.7 360,242.6 372,242.9 384,243.6 396,245.2 408,247.9 420,251.2 432,254.4 444,256.7 456,257.5 468,256.9 480,255.6 492,254.4 504,254.0 516,254.6 528,256.0 540,257.2 552,257.8 564,257.3 576,256.0 588,254.5 600,253.8 612,254.4 624,256.4 636,259.4 648,262.6 660,265.0 672,266.3 684,266.7 696,266.7 708,267.0" stroke="url(#ws)" stroke-width="0.9" fill="none" opacity="0.78"/><polyline points="0,231.7 12,233.5 24,233.9 36,232.8 48,231.1 60,229.4 72,228.4 84,228.2 96,228.4 108,228.3 120,227.4 132,225.4 144,222.7 156,220.1 168,218.5 180,218.6 192,220.4 204,223.4 216,226.8 228,229.7 240,231.8 252,233.3 264,234.8 276,236.9 288,240.0 300,243.9 312,248.1 324,251.6 336,253.7 348,254.2 360,253.4 372,252.3 384,251.5 396,251.7 408,252.8 420,254.3 432,255.6 444,255.9 456,255.3 468,254.1 480,253.2 492,253.3 504,254.9 516,257.7 528,261.1 540,264.1 552,266.1 564,266.9 576,266.9 588,266.8 600,267.2 612,268.7 624,270.8 636,272.9 648,274.2 660,274.3 672,273.0 684,271.0 696,269.1 708,268.2" stroke="url(#ws)" stroke-width="1.2" fill="none" opacity="0.89"/><polyline points="0,232.2 12,232.9 24,233.6 36,233.7 48,232.7 60,230.8 72,228.5 84,226.8 96,226.3 108,227.1 120,229.1 132,231.3 144,233.0 156,233.7 168,233.6 180,233.2 192,233.2 204,234.4 216,236.7 228,239.8 240,242.7 252,244.7 264,245.5 276,245.1 288,244.4 300,244.1 312,244.9 324,246.9 336,249.6 348,252.4 360,254.5 372,255.5 384,255.8 396,255.9 408,256.6 420,258.5 432,261.4 444,264.9 456,268.0 468,270.0 480,270.5 492,269.9 504,268.8 516,268.0 528,268.1 540,269.2 552,270.6 564,271.7 576,271.8 588,270.9 600,269.2 612,267.7 624,267.1 636,267.9 648,270.1 660,273.1 672,275.9 684,277.8 696,278.7 708,278.9" stroke="url(#ws)" stroke-width="0.9" fill="none" opacity="0.97"/><polyline points="0,242.2 12,240.6 24,239.8 36,239.9 48,240.3 60,240.3 72,239.3 84,237.1 96,234.4 108,231.8 120,230.3 132,230.4 144,232.0 156,234.5 168,237.0 180,238.9 192,240.0 204,240.5 216,241.3 228,242.9 240,245.6 252,249.2 264,252.9 276,255.9 288,257.5 300,257.7 312,256.9 324,256.0 336,255.8 348,256.7 360,258.6 372,260.8 384,262.6 396,263.5 408,263.5 420,263.1 432,263.0 444,264.1 456,266.4 468,269.8 480,273.2 492,276.0 504,277.5 516,277.7 528,277.0 540,276.4 552,276.4 564,277.4 576,279.0 588,280.5 600,281.1 612,280.6 624,279.0 636,277.1 648,275.7 660,275.5 672,276.7 684,279.0 696,281.6 708,283.8" stroke="url(#ws)" stroke-width="0.9" fill="none" opacity="1.00"/><polyline points="0,249.1 12,251.2 24,251.8 36,251.1 48,249.4 60,247.6 72,246.4 84,246.1 96,246.3 108,246.4 120,245.7 132,243.9 144,241.3 156,238.7 168,236.8 180,236.6 192,238.1 204,241.0 216,244.4 228,247.5 240,249.8 252,251.4 264,252.8 276,254.7 288,257.5 300,261.4 312,265.5 324,269.3 336,271.7 348,272.5 360,272.0 372,270.8 384,269.9 396,269.9 408,270.8 420,272.3 432,273.6 444,274.2 456,273.7 468,272.5 480,271.5 492,271.3 504,272.5 516,275.1 528,278.4 540,281.6 552,283.8 564,284.9 576,285.0 588,284.8 600,285.2 612,286.4 624,288.5 636,290.7 648,292.3 660,292.6 672,291.6 684,289.7 696,287.7 708,286.6" stroke="url(#ws)" stroke-width="1.2" fill="none" opacity="0.97"/><polyline points="0,250.5 12,250.8 24,251.5 36,251.9 48,251.3 60,249.6 72,247.2 84,245.1 96,243.9 108,244.2 120,245.8 132,248.0 144,250.1 156,251.3 168,251.7 180,251.4 192,251.4 204,252.2 216,254.3 228,257.3 240,260.5 252,263.1 264,264.4 276,264.5 288,263.8 300,263.1 312,263.3 324,264.8 336,267.2 348,269.9 360,272.3 372,273.6 384,274.0 396,274.0 408,274.3 420,275.7 432,278.2 444,281.6 456,285.0 468,287.5 480,288.7 492,288.5 504,287.6 516,286.6 528,286.4 540,287.1 552,288.5 564,289.9 576,290.5 588,289.9 600,288.4 612,286.7 624,285.5 636,285.7 648,287.3 660,290.0 672,292.9 684,295.2 696,296.5 708,296.9" stroke="url(#ws)" stroke-width="0.9" fill="none" opacity="0.89"/><polyline points="0,260.1 12,262.6 24,263.7 36,263.3 48,261.8 60,260.0 72,258.6 84,258.0 96,258.2 108,258.4 120,258.0 132,256.6 144,254.3 156,251.6 168,249.5 180,248.8 192,249.8 204,252.4 216,255.8 228,259.1 240,261.6 252,263.4 264,264.8 276,266.5 288,269.0 300,272.6 312,276.7 324,280.7 336,283.6 348,284.9 360,284.7 372,283.6 384,282.5 396,282.2 408,282.9 420,284.3 432,285.7 444,286.5 456,286.3 468,285.2 480,283.9 492,283.4 504,284.1 516,286.3 528,289.5 540,292.7 552,295.3 564,296.7 576,297.1 588,296.9 600,297.1 612,298.1 624,300.0 636,302.3 648,304.2 660,305.0 672,304.4 684,302.7 696,300.7 708,299.2" stroke="url(#ws)" stroke-width="0.9" fill="none" opacity="0.78"/><polyline points="0,264.0 12,263.3 24,263.4 36,264.0 48,264.2 60,263.4 72,261.4 84,258.9 96,256.5 108,255.0 120,255.1 132,256.6 144,259.0 156,261.3 168,262.9 180,263.7 192,263.9 204,264.2 216,265.5 228,267.9 240,271.2 252,274.7 264,277.5 276,279.1 288,279.3 300,278.5 312,277.7 324,277.7 336,278.8 348,280.9 360,283.3 372,285.4 384,286.6 396,286.8 408,286.5 420,286.7 432,287.8 444,290.2 456,293.5 468,297.0 480,299.7 492,301.1 504,301.2 516,300.4 528,299.6 540,299.5 552,300.3 564,301.8 576,303.2 588,303.9 600,303.4 612,301.8 624,300.0 636,298.6 648,298.6 660,299.9 672,302.4 684,305.1 696,307.4 708,308.7" stroke="url(#ws)" stroke-width="1.2" fill="none" opacity="0.68"/><polyline points="0,273.6 12,275.5 24,275.9 36,274.9 48,273.1 60,271.4 72,270.4 84,270.2 96,270.4 108,270.3 120,269.5 132,267.5 144,264.8 156,262.2 168,260.5 180,260.6 192,262.4 204,265.3 216,268.7 228,271.7 240,273.8 252,275.3 264,276.8 276,278.8 288,281.9 300,285.8 312,290.0 324,293.5 336,295.7 348,296.3 360,295.5 372,294.4 384,293.6 396,293.7 408,294.8 420,296.3 432,297.6 444,298.0 456,297.3 468,296.2 480,295.2 492,295.3 504,296.8 516,299.6 528,302.9 540,306.0 552,308.0 564,308.9 576,308.9 588,308.8 600,309.2 612,310.6 624,312.7 636,314.9 648,316.2 660,316.3 672,315.1 684,313.1 696,311.2 708,310.3" stroke="url(#ws)" stroke-width="0.9" fill="none" opacity="0.60"/><polyline points="0,280.4 12,281.9 24,281.8 36,280.5 48,278.7 60,277.1 72,276.3 84,276.3 96,276.5 108,276.2 120,274.9 132,272.6 144,269.8 156,267.4 168,266.2 180,266.7 192,268.8 204,272.0 216,275.3 228,278.0 240,279.9 252,281.3 264,282.8 276,285.2 288,288.5 300,292.6 312,296.7 324,299.9 336,301.6 348,301.7 360,300.7 372,299.6 384,299.0 396,299.5 408,300.8 420,302.4 432,303.4 444,303.5 456,302.7 468,301.6 480,300.9 492,301.5 504,303.4 516,306.5 528,309.9 540,312.7 552,314.4 564,314.9 576,314.7 588,314.7 600,315.4 612,317.0 624,319.1 636,321.1 648,322.1 660,321.7 672,320.2 684,318.1 696,316.4 708,315.9" stroke="url(#ws)" stroke-width="0.9" fill="none" opacity="0.55"/><polyline points="0,282.2 12,281.4 24,281.4 36,282.0 48,282.2 60,281.5 72,279.7 84,277.2 96,274.6 108,273.0 120,272.9 132,274.3 144,276.6 156,278.9 168,280.7 180,281.6 192,281.9 204,282.3 216,283.4 228,285.7 240,289.0 252,292.5 264,295.5 276,297.3 288,297.6 300,297.0 312,296.1 324,295.9 336,296.8 348,298.8 360,301.2 372,303.4 384,304.6 396,304.9 408,304.6 420,304.6 432,305.6 444,307.8 456,311.1 468,314.6 480,317.5 492,319.1 504,319.3 516,318.6 528,317.8 540,317.6 552,318.3 564,319.7 576,321.2 588,322.0 600,321.7 612,320.2 624,318.4 636,316.9 648,316.6 660,317.8 672,320.1 684,322.8 696,325.2 708,326.6" stroke="url(#ws)" stroke-width="1.2" fill="none" opacity="0.52"/><polyline points="0,286.5 12,285.7 24,284.6 36,284.1 48,284.7 60,286.3 72,288.6 84,290.5 96,291.4 108,290.8 120,289.2 132,287.1 144,285.5 156,285.0 168,285.6 180,287.0 192,288.4 204,289.1 216,288.9 228,288.1 240,287.6 252,287.9 264,289.8 276,293.0 288,297.0 300,300.9 312,304.0 324,305.8 336,306.8 348,307.7 360,309.0 372,311.3 384,314.4 396,317.6 408,320.2 420,321.3 432,321.0 444,319.6 456,318.0 468,316.9 480,316.9 492,318.0 504,319.4 516,320.5 528,320.8 540,320.1 552,319.0 564,318.2 576,318.5 588,320.3 600,323.3 612,326.7 624,329.6 636,331.5 648,332.2 660,332.1 672,331.9 684,332.4 696,333.8 708,335.9" stroke="url(#ws)" stroke-width="0.9" fill="none" opacity="0.51"/><polyline points="0,299.4 12,300.2 24,299.4 36,297.8 48,296.0 60,294.7 72,294.3 84,294.4 96,294.5 108,293.7 120,291.9 132,289.2 144,286.4 156,284.4 168,283.9 180,285.2 192,287.8 204,291.1 216,294.1 228,296.4 240,297.9 252,299.3 264,301.1 276,303.9 288,307.7 300,311.9 312,315.6 324,318.1 336,319.0 348,318.5 360,317.4 372,316.4 384,316.3 396,317.3 408,318.9 420,320.3 432,321.0 444,320.8 456,319.8 468,318.8 480,318.8 492,320.1 504,322.7 516,326.1 528,329.3 540,331.6 552,332.7 564,332.7 576,332.5 588,332.7 600,333.7 612,335.6 624,337.7 636,339.2 648,339.5 660,338.5 672,336.6 684,334.6 696,333.4 708,333.5" stroke="url(#ws)" stroke-width="0.9" fill="none" opacity="0.50"/><polyline points="0,306.1 12,304.9 24,303.0 36,301.4 48,300.5 60,300.4 72,300.6 84,300.4 96,299.2 108,296.9 120,293.9 132,291.2 144,289.7 156,289.8 168,291.5 180,294.3 192,297.3 204,299.7 216,301.4 228,302.6 240,303.9 252,305.9 264,309.1 276,313.0 288,317.0 300,320.3 312,322.0 324,322.3 336,321.4 348,320.3 360,319.8 372,320.3 384,321.8 396,323.6 408,325.0 420,325.5 432,325.1 444,324.3 456,323.9 468,324.6 480,326.7 492,329.9 504,333.3 516,336.2 528,338.0 540,338.4 552,338.1 564,337.7 576,338.1 588,339.3 600,341.1 612,342.9 624,343.8 636,343.4 648,341.8 660,339.8 672,338.1 684,337.6 696,338.5 708,340.4" stroke="url(#ws)" stroke-width="1.2" fill="none" opacity="0.50"/>
    <path d="M0 0H171L0 328Z" fill="url(#bl)" opacity=".5"/><path d="M0 0H166L0 318Z" fill="url(#bl)"/>
      <path d="M0 0H166L0 318Z" fill="url(#gl)"/>
    </svg>
    <svg class="a" style="left:60px;top:65px" width="300" height="90" viewBox="0 0 300 90"><text x="0.5" y="38" font-family="Liberation Sans" font-weight="bold" font-size="49.5" fill="#f2f3f7" stroke="#f2f3f7" stroke-width="2.6" stroke-linejoin="miter" textLength="287.5" lengthAdjust="spacingAndGlyphs">ALPHA</text><text x="1.5" y="84" font-family="Liberation Sans" font-weight="bold" font-size="50.5" fill="#f2f3f7" stroke="#f2f3f7" stroke-width="2.6" stroke-linejoin="miter" textLength="296" lengthAdjust="spacingAndGlyphs">GAMES</text></svg>
    <div class="a" style="left:66px;top:171px;font-size:15.5px;line-height:14.5px;color:#e8eaf2;letter-spacing:2.8px;-webkit-text-stroke:.3px currentColor">Gaming Consulting<br>services</div>
  </div>
  <!-- collapse handle -->
  <svg class="a" style="left:-1px;top:372px" width="14" height="86" viewBox="0 0 14 86"><path d="M0 0C1 9 13 10 13 19V65C13 75 1 77 0 86Z" fill="#252627"/><path d="M6 41L3 44L6 47" stroke="#fff" stroke-width="1.2" fill="none"/></svg>
  <!-- scroll bars -->
  <div class="a" style="left:0;top:652px;width:848px;height:18px;background:#ebecf0"></div>
  <svg class="a" style="left:4px;top:659px" width="6" height="8" viewBox="0 0 6 8"><path d="M5 0V8L0 4Z" fill="#a3a5a8"/></svg>
  <svg class="a" style="left:824px;top:659px" width="6" height="8" viewBox="0 0 6 8"><path d="M0 0V8L5 4Z" fill="#a3a5a8"/></svg>
  <!-- timeline -->
  <div class="a" style="left:0;top:671px;width:848px;height:160px;background:#fff"></div>
  <!-- playhead -->
  <svg class="a" style="left:95px;top:669px" width="11" height="8" viewBox="0 0 11 8"><path d="M0 0H11V3L5.5 8L0 3Z" fill="#0e1318"/></svg>
  <div class="a" style="left:99px;top:688px;width:2px;height:76px;background:#0e1318"></div>
  <!-- play -->
  <div class="a" style="left:20px;top:704px;width:56px;height:56px;border-radius:50%;background:#fff;box-shadow:0 0 6px rgba(0,0,0,.12),0 1px 3px rgba(0,0,0,.08)"></div>
  <svg class="a" style="left:41px;top:723px" width="15" height="17" viewBox="0 0 15 17"><path d="M1 1.2Q1 0 2 .6L14 7.7Q15 8.5 14 9.3L2 16.4Q1 17 1 15.8Z" fill="#0e1318"/></svg>
  <!-- selected clip -->
  <div class="a" style="left:101px;top:682px;width:337px;height:76px;border:3px solid #7d4ce8;border-radius:10px"></div>
  <div class="a" style="left:106px;top:688px;width:327px;height:64px;border-radius:6px;overflow:hidden;background:#040a30">
<div class="a" style="left:-6px;top:0;width:114px;height:64px;overflow:hidden;background:linear-gradient(180deg,#040a30,#030826)">
      <svg class="a" style="left:0;top:0" width="114" height="64" viewBox="0 0 114 64"><path d="M0 34 C20 30 40 32 60 36 S95 40 114 35" stroke="#4b2d5e" stroke-width="4" fill="none" opacity=".4"/><path d="M0 42 C25 39 45 41 70 44 S100 46 114 42" stroke="#3d2550" stroke-width="2" fill="none" opacity=".35"/><path d="M0 0H26L0 50Z" fill="#1a2fb8" opacity=".55"/><path d="M114 32V64H96Z" fill="#1c2cc0" opacity=".85"/></svg>
      <svg class="a" style="left:10px;top:10px" width="50" height="20" viewBox="0 0 50 20"><text x="0" y="6.5" font-family="Liberation Sans" font-weight="bold" font-size="8.5" fill="#fff" stroke="#fff" stroke-width=".3" textLength="45" lengthAdjust="spacingAndGlyphs">ALPHA</text><text x="0" y="14" font-family="Liberation Sans" font-weight="bold" font-size="8.5" fill="#fff" stroke="#fff" stroke-width=".3" textLength="46" lengthAdjust="spacingAndGlyphs">GAMES</text></svg>
      <div class="a" style="left:11px;top:26px;width:12px;height:1.5px;background:rgba(255,255,255,.55)"></div>
      <div class="a" style="left:24px;top:25.5px;width:16px;height:1.5px;background:rgba(255,255,255,.45)"></div>
      <div class="a" style="left:11px;top:28px;width:9px;height:1.5px;background:rgba(255,255,255,.5)"></div>
    </div><div class="a" style="left:107.5px;top:0;width:114px;height:64px;overflow:hidden;background:linear-gradient(180deg,#040a30,#030826)">
      <svg class="a" style="left:0;top:0" width="114" height="64" viewBox="0 0 114 64"><path d="M0 34 C20 30 40 32 60 36 S95 40 114 35" stroke="#4b2d5e" stroke-width="4" fill="none" opacity=".4"/><path d="M0 42 C25 39 45 41 70 44 S100 46 114 42" stroke="#3d2550" stroke-width="2" fill="none" opacity=".35"/><path d="M0 0H26L0 50Z" fill="#1a2fb8" opacity=".55"/><path d="M114 32V64H96Z" fill="#1c2cc0" opacity=".85"/></svg>
      <svg class="a" style="left:10px;top:10px" width="50" height="20" viewBox="0 0 50 20"><text x="0" y="6.5" font-family="Liberation Sans" font-weight="bold" font-size="8.5" fill="#fff" stroke="#fff" stroke-width=".3" textLength="45" lengthAdjust="spacingAndGlyphs">ALPHA</text><text x="0" y="14" font-family="Liberation Sans" font-weight="bold" font-size="8.5" fill="#fff" stroke="#fff" stroke-width=".3" textLength="46" lengthAdjust="spacingAndGlyphs">GAMES</text></svg>
      <div class="a" style="left:11px;top:26px;width:12px;height:1.5px;background:rgba(255,255,255,.55)"></div>
      <div class="a" style="left:24px;top:25.5px;width:16px;height:1.5px;background:rgba(255,255,255,.45)"></div>
      <div class="a" style="left:11px;top:28px;width:9px;height:1.5px;background:rgba(255,255,255,.5)"></div>
    </div><div class="a" style="left:221px;top:0;width:114px;height:64px;overflow:hidden;background:linear-gradient(180deg,#040a30,#030826)">
      <svg class="a" style="left:0;top:0" width="114" height="64" viewBox="0 0 114 64"><path d="M0 34 C20 30 40 32 60 36 S95 40 114 35" stroke="#4b2d5e" stroke-width="4" fill="none" opacity=".4"/><path d="M0 42 C25 39 45 41 70 44 S100 46 114 42" stroke="#3d2550" stroke-width="2" fill="none" opacity=".35"/><path d="M0 0H26L0 50Z" fill="#1a2fb8" opacity=".55"/><path d="M114 32V64H96Z" fill="#1c2cc0" opacity=".85"/></svg>
      <svg class="a" style="left:10px;top:10px" width="50" height="20" viewBox="0 0 50 20"><text x="0" y="6.5" font-family="Liberation Sans" font-weight="bold" font-size="8.5" fill="#fff" stroke="#fff" stroke-width=".3" textLength="45" lengthAdjust="spacingAndGlyphs">ALPHA</text><text x="0" y="14" font-family="Liberation Sans" font-weight="bold" font-size="8.5" fill="#fff" stroke="#fff" stroke-width=".3" textLength="46" lengthAdjust="spacingAndGlyphs">GAMES</text></svg>
      <div class="a" style="left:11px;top:26px;width:12px;height:1.5px;background:rgba(255,255,255,.55)"></div>
      <div class="a" style="left:24px;top:25.5px;width:16px;height:1.5px;background:rgba(255,255,255,.45)"></div>
      <div class="a" style="left:11px;top:28px;width:9px;height:1.5px;background:rgba(255,255,255,.5)"></div>
    </div>
  </div>
  <div class="a" style="left:454px;top:688px;width:400px;height:64px;border-radius:6px 0 0 6px;overflow:hidden;background:#050b30">
<div class="a" style="left:3px;top:0;width:114px;height:64px;overflow:hidden;background:#050b30">
      <div class="a" style="left:0;top:0;width:114px;height:20px;background:linear-gradient(180deg,#08070e 0%,#150a14 40%,#3a1622 70%,#7a3040 92%,#40182a 100%)"></div>
      <svg class="a" style="left:0;top:0" width="114" height="20" viewBox="0 0 114 20"><path d="M0 16 C15 11 30 18 50 15 S85 11 114 17 V20 H0Z" fill="#8a3a4a" opacity=".45"/><path d="M0 13 C20 9 40 15 60 11 S95 9 114 14" stroke="#a04a5a" stroke-width="1" fill="none" opacity=".35"/></svg>
      <div class="a" style="left:2px;top:0;width:2px;height:64px;background:#a8c8e8"></div>
      <div class="a" style="left:11px;top:25px;font:bold 5.5px/6px 'Liberation Sans',sans-serif;color:#eef0f6;letter-spacing:.9px;-webkit-text-stroke:.2px #eef0f6">BECOME OUR<br>PARTNER<br>TODAY</div>
      <div class="a" style="left:11px;top:54px;width:18px;height:1.2px;background:rgba(255,255,255,.4)"></div>
      <div class="a" style="left:11px;top:57.5px;width:28px;height:1.6px;background:rgba(255,255,255,.45)"></div>
    </div><div class="a" style="left:116.5px;top:0;width:114px;height:64px;overflow:hidden;background:#050b30">
      <div class="a" style="left:0;top:0;width:114px;height:20px;background:linear-gradient(180deg,#08070e 0%,#150a14 40%,#3a1622 70%,#7a3040 92%,#40182a 100%)"></div>
      <svg class="a" style="left:0;top:0" width="114" height="20" viewBox="0 0 114 20"><path d="M0 16 C15 11 30 18 50 15 S85 11 114 17 V20 H0Z" fill="#8a3a4a" opacity=".45"/><path d="M0 13 C20 9 40 15 60 11 S95 9 114 14" stroke="#a04a5a" stroke-width="1" fill="none" opacity=".35"/></svg>
      <div class="a" style="left:2px;top:0;width:2px;height:64px;background:#a8c8e8"></div>
      <div class="a" style="left:11px;top:25px;font:bold 5.5px/6px 'Liberation Sans',sans-serif;color:#eef0f6;letter-spacing:.9px;-webkit-text-stroke:.2px #eef0f6">BECOME OUR<br>PARTNER<br>TODAY</div>
      <div class="a" style="left:11px;top:54px;width:18px;height:1.2px;background:rgba(255,255,255,.4)"></div>
      <div class="a" style="left:11px;top:57.5px;width:28px;height:1.6px;background:rgba(255,255,255,.45)"></div>
    </div><div class="a" style="left:230px;top:0;width:114px;height:64px;overflow:hidden;background:#050b30">
      <div class="a" style="left:0;top:0;width:114px;height:20px;background:linear-gradient(180deg,#08070e 0%,#150a14 40%,#3a1622 70%,#7a3040 92%,#40182a 100%)"></div>
      <svg class="a" style="left:0;top:0" width="114" height="20" viewBox="0 0 114 20"><path d="M0 16 C15 11 30 18 50 15 S85 11 114 17 V20 H0Z" fill="#8a3a4a" opacity=".45"/><path d="M0 13 C20 9 40 15 60 11 S95 9 114 14" stroke="#a04a5a" stroke-width="1" fill="none" opacity=".35"/></svg>
      <div class="a" style="left:2px;top:0;width:2px;height:64px;background:#a8c8e8"></div>
      <div class="a" style="left:11px;top:25px;font:bold 5.5px/6px 'Liberation Sans',sans-serif;color:#eef0f6;letter-spacing:.9px;-webkit-text-stroke:.2px #eef0f6">BECOME OUR<br>PARTNER<br>TODAY</div>
      <div class="a" style="left:11px;top:54px;width:18px;height:1.2px;background:rgba(255,255,255,.4)"></div>
      <div class="a" style="left:11px;top:57.5px;width:28px;height:1.6px;background:rgba(255,255,255,.45)"></div>
    </div><div class="a" style="left:343.5px;top:0;width:114px;height:64px;overflow:hidden;background:#050b30">
      <div class="a" style="left:0;top:0;width:114px;height:20px;background:linear-gradient(180deg,#08070e 0%,#150a14 40%,#3a1622 70%,#7a3040 92%,#40182a 100%)"></div>
      <svg class="a" style="left:0;top:0" width="114" height="20" viewBox="0 0 114 20"><path d="M0 16 C15 11 30 18 50 15 S85 11 114 17 V20 H0Z" fill="#8a3a4a" opacity=".45"/><path d="M0 13 C20 9 40 15 60 11 S95 9 114 14" stroke="#a04a5a" stroke-width="1" fill="none" opacity=".35"/></svg>
      <div class="a" style="left:2px;top:0;width:2px;height:64px;background:#a8c8e8"></div>
      <div class="a" style="left:11px;top:25px;font:bold 5.5px/6px 'Liberation Sans',sans-serif;color:#eef0f6;letter-spacing:.9px;-webkit-text-stroke:.2px #eef0f6">BECOME OUR<br>PARTNER<br>TODAY</div>
      <div class="a" style="left:11px;top:54px;width:18px;height:1.2px;background:rgba(255,255,255,.4)"></div>
      <div class="a" style="left:11px;top:57.5px;width:28px;height:1.6px;background:rgba(255,255,255,.45)"></div>
    </div>
  </div>
    <div class="a" style="left:434px;top:708px;width:24px;height:24px;border-radius:50%;background:#fff;box-shadow:0 0 2px rgba(0,0,0,.08)"></div>
  <svg class="a" style="left:440px;top:714px" width="13" height="13" viewBox="0 0 13 13"><path d="M6.5 0V13M0 6.5H13" stroke="#0e1318" stroke-width="1.6"/></svg>
  <div class="a" style="left:119px;top:764px;width:740px;height:4px;border-radius:2px;background:#7d4ce8"></div>
  <!-- bottom scrollbar -->
  <div class="a" style="left:0;top:774px;width:848px;height:12px;background:#f8f8f8"></div>
  <div class="a" style="left:15px;top:775px;width:701px;height:10px;background:#c1c1c1"></div>
  <svg class="a" style="left:4px;top:776px" width="6" height="8" viewBox="0 0 6 8"><path d="M5 0V8L0 4Z" fill="#a3a5a8"/></svg>
  <svg class="a" style="left:838px;top:776px" width="6" height="8" viewBox="0 0 6 8"><path d="M0 0V8L5 4Z" fill="#505050"/></svg>
  <!-- bottom bar -->
  <svg class="a" style="left:16px;top:805px" width="19" height="16" viewBox="0 0 19 16"><path d="M0 1H13M0 4.5H10M0 8H7M0 11.5H4" stroke="#0e1318" stroke-width="1.6"/><path d="M6 15L7 11.5L15.5 3A1.4 1.4 0 0 1 17.5 5L9 13.5Z" stroke="#0e1318" stroke-width="1.5" fill="none" stroke-linejoin="round"/></svg>
  <div class="a t14" style="left:44px;top:803px;color:#0e1318;font-size:14.8px">Notes</div>
  <div class="a t14" style="left:110px;top:803px;color:#0e1318;font-size:14.2px">0:00 / 0:31</div>
  <svg class="a" style="left:390px;top:802px" width="19" height="19" viewBox="0 0 19 19"><rect x="0.7" y="0.7" width="17.6" height="10" stroke="#555" stroke-width="1.3" fill="none"/><rect x="0.5" y="12.5" width="18" height="6" fill="#0e1318"/><path d="M6.5 13.5V17.5M12.5 13.5V17.5" stroke="#fff" stroke-width="1.2"/><rect x="2" y="14" width="3" height="3" fill="#fff"/><rect x="8" y="14" width="3" height="3" fill="#fff"/><rect x="14" y="14" width="3" height="3" fill="#fff"/></svg>
  <div class="a" style="left:443px;top:811px;width:30px;height:2px;background:#6b6e72"></div>
  <div class="a" style="left:473px;top:811px;width:138px;height:2px;background:#dcdde0"></div>
  <div class="a" style="left:467px;top:806px;width:13px;height:13px;border-radius:50%;background:#0e1318"></div>
  <div class="a t14" style="left:649px;top:803px;color:#0e1318;font-size:14px">100%</div>
  <svg class="a" style="left:715px;top:800px" width="24" height="22" viewBox="0 0 24 22"><rect x="1" y="4" width="17" height="17" rx="1.5" stroke="#0e1318" stroke-width="1.6" fill="#fff"/><path d="M5 1.5H21.5V18" stroke="#0e1318" stroke-width="1.3" fill="none"/><text x="9.5" y="17" font-family="Liberation Sans" font-size="11" font-weight="bold" text-anchor="middle" fill="#0e1318">2</text></svg>
  <svg class="a" style="left:758px;top:802px" width="19" height="19" viewBox="0 0 19 19"><path d="M11 1.5H17.5V8M17.5 1.5L11 8M8 17.5H1.5V11M1.5 17.5L8 11" stroke="#0e1318" stroke-width="1.6" fill="none"/></svg>
  <div class="a" style="left:790px;top:800px;width:1px;height:24px;background:#dcdde0"></div>
  <div class="a" style="left:813px;top:802px;width:21px;height:21px;border-radius:50%;border:1.6px solid #0e1318"></div>
  <div class="a" style="left:813px;top:804px;width:21px;text-align:center;font-size:13px;font-weight:bold;color:#0e1318">?</div>
</div>
<div class="a" style="left:0;top:959px;width:1280px;height:1px;background:#1e1f21"></div>
<div class="a" style="left:1279px;top:72px;width:1px;height:888px;background:#1e1f21"></div>
<!-- website panel -->
<div id="wp" class="a" style="left:928px;top:128px;width:344px;height:650px;background:#fff;box-shadow:0 0 0 1px rgba(57,76,96,.15),0 2px 6px rgba(0,0,0,.12)">
  <svg class="a" style="left:16px;top:16px" width="20" height="16" viewBox="0 0 20 16"><rect x="0.8" y="0.8" width="18.4" height="14.4" rx="1.6" stroke="#0e1318" stroke-width="1.6" fill="none"/><rect x="1" y="1" width="18" height="2.4" fill="#0e1318"/><path d="M5 10.6C3 9.6 3 5.4 6.2 4.8H9.5C12 4.8 12.5 8.2 10.8 9.7" stroke="#0e1318" stroke-width="1.4" fill="none" stroke-linecap="round"/><path d="M8.7 6.8C7.2 8 7.2 12.6 10.5 12.6H13.5C16.2 12.6 16.7 8.8 14.5 7" stroke="#0e1318" stroke-width="1.4" fill="none" stroke-linecap="round"/></svg>
  <div class="a sb15" style="left:46px;top:15px;font-size:15px">Website</div>
  <div class="a" style="left:257px;top:15px;width:41px;height:18px;border-radius:9px;background:#6b6f73;color:#fff;font-size:10px;font-weight:bold;letter-spacing:.8px;text-align:center;line-height:18px">BETA</div>
  <svg class="a" style="left:309px;top:17px" width="14" height="14" viewBox="0 0 14 14"><path d="M1 1L13 13M13 1L1 13" stroke="#0e1318" stroke-width="1.8"/></svg>
  <div class="a" style="left:0;top:47px;width:344px;height:1px;background:#d5d7da"></div>
  <div class="a t15" style="left:16px;top:64px;line-height:22px;color:#2a2e33;font-size:14.6px">Publish your design as a beautiful, responsive<br>website in just a few clicks.</div>
  <!-- preview -->
  <div class="a" style="left:16px;top:124px;width:312px;height:194px;border-radius:4px;background:#f1f2f4;box-shadow:0 1px 2px rgba(0,0,0,.12)"></div>
  <div class="a" style="left:16px;top:124px;width:312px;height:17px;border-radius:4px 4px 0 0;background:#dfe1e4"></div>
  <div class="a" style="left:17px;top:141px;width:310px;height:174px;overflow:hidden;background:#030a2c">
    <svg class="a" style="left:0;top:0" width="310" height="174" viewBox="0 0 310 174"><defs><linearGradient id="bl2" x1="0" y1="0" x2="1" y2="0.3"><stop offset="0" stop-color="#1a30b8"/><stop offset="1" stop-color="#08125a"/></linearGradient></defs><path d="M0 0H73L0 140Z" fill="url(#bl2)" opacity=".75"/><defs><linearGradient id="br2" x1="1" y1="0.3" x2="0.6" y2="1"><stop offset="0" stop-color="#0a1466"/><stop offset="1" stop-color="#1a2cb0"/></linearGradient></defs><path d="M310 92V174H263Z" fill="url(#br2)"/></svg>
    <svg class="a" style="left:27px;top:28px" width="140" height="42" viewBox="0 0 140 42"><text x="0.5" y="17" font-family="Liberation Sans" font-weight="bold" font-size="21.5" fill="#f2f3f7" stroke="#f2f3f7" stroke-width="1.1" textLength="122" lengthAdjust="spacingAndGlyphs">ALPHA</text><text x="0.5" y="37" font-family="Liberation Sans" font-weight="bold" font-size="22" fill="#f2f3f7" stroke="#f2f3f7" stroke-width="1.1" textLength="126" lengthAdjust="spacingAndGlyphs">GAMES</text></svg>
    <div class="a" style="left:29px;top:75px;font-size:8.3px;line-height:6px;color:#e8eaf2;letter-spacing:.45px">Gaming Consulting<br>services</div>
  </div>
  <div class="a circ" style="left:25px;top:216px"><svg width="24" height="24" viewBox="0 0 24 24"><path d="M13.5 9L10.5 12L13.5 15" stroke="#3c3f43" stroke-width="1.4" fill="none"/></svg></div>
  <div class="a circ" style="left:295px;top:216px"><svg width="24" height="24" viewBox="0 0 24 24"><path d="M10.5 9L13.5 12L10.5 15" stroke="#3c3f43" stroke-width="1.4" fill="none"/></svg></div>
  <svg class="a" style="left:278px;top:276px" width="14" height="22" viewBox="0 0 14 22"><path d="M1 1V17L4.8 13.5L7.5 20L10 19L7.3 12.6H12.5Z" fill="#fff" stroke="#000" stroke-width="1.1" stroke-linejoin="round"/></svg>
  <div class="a" style="left:16px;top:337px;font-size:12.8px;color:#0e1318;-webkit-text-stroke:.35px currentColor">Web style</div>
  <div class="a" style="left:16px;top:362px;width:312px;height:40px;border:1px solid #c5c7cb;border-radius:4px"></div>
  <div class="a t15" style="left:32px;top:374px;color:#0e1318;font-size:14.7px">Presentation</div>
  <svg class="a" style="left:302px;top:380px" width="12" height="8" viewBox="0 0 12 8"><path d="M1.5 1.5L6 6L10.5 1.5" stroke="#0e1318" stroke-width="1.8" fill="none"/></svg>
  <div class="a t15" style="left:16px;top:422px;color:#0e1318;font-size:14.8px">1 x premium music track</div>
  <svg class="a" style="left:183px;top:429px" width="12" height="8" viewBox="0 0 12 8"><path d="M1.5 1.5L6 6L10.5 1.5" stroke="#0e1318" stroke-width="1.8" fill="none"/></svg>
  <div class="a" style="left:290px;top:421px;width:38px;text-align:right;font-size:15px;font-weight:bold;color:#0e1318">$3</div>
  <!-- promo -->
  <div class="a" style="left:16px;top:466px;width:312px;height:119px;border-radius:8px;background:#f2f3f5"></div>
  <div class="a" style="left:32px;top:482px;width:72px;height:72px;border-radius:4px;background:linear-gradient(180deg,#23324a 0%,#1e2a40 50%,#2a3a52 100%);overflow:hidden">
    <div class="a" style="left:0;top:34px;width:52px;height:4px;border-radius:2px;background:linear-gradient(90deg,rgba(120,140,170,.2),rgba(200,215,235,.6))"></div>
    <div class="a" style="left:10px;top:47px;width:51px;height:16px;border-radius:8px;background:rgba(10,16,28,.75)"></div>
    <svg class="a" style="left:15px;top:51px" width="11" height="9" viewBox="0 0 11 9"><path d="M0.5 2L3 4.5L5.5 0.5L8 4.5L10.5 2L9.5 8.5H1.5Z" fill="#f5b52e"/></svg>
    <div class="a" style="left:28px;top:48px;font-size:10.5px;font-weight:bold;color:#fff;letter-spacing:.5px;line-height:14px">PRO</div>
  </div>
  <div class="a t15" style="left:116px;top:482px;line-height:22px;color:#1e2226;font-size:14.6px">Wave goodbye to watermarks<br>with Canva Pro! Unlock our<br>entire content library of 100+<br>million. <span style="color:#7d2ae8;text-decoration:underline">Try it free for 30 days.</span></div>
  <div class="a" style="left:16px;top:594px;width:312px;height:40px;border-radius:4px;background:#8b3dff"></div>
  <div class="a sb15" style="left:16px;top:605px;width:312px;text-align:center;color:#fff;font-size:14.8px">Pay and Open website</div>
</div>
<div class="a" style="left:1272px;top:128px;width:7px;height:650px;background:linear-gradient(90deg,#f4f4f5,#e6e6e8)"></div>
<svg class="a" style="left:1271px;top:180px" width="6" height="6" viewBox="0 0 6 6"><path d="M1 5H5V1Z" fill="#9a9a9a"/></svg>
<svg class="a" style="left:1271px;top:770px" width="6" height="6" viewBox="0 0 6 6"><path d="M1 5H5V1Z" fill="#9a9a9a"/></svg>
<div class="a" style="left:1266px;top:779px;width:13px;height:19px;background:#dcdcde"></div>
<div class="a" style="left:1279px;top:72px;width:1px;height:888px;background:#1e1f21"></div>
</body></html>
